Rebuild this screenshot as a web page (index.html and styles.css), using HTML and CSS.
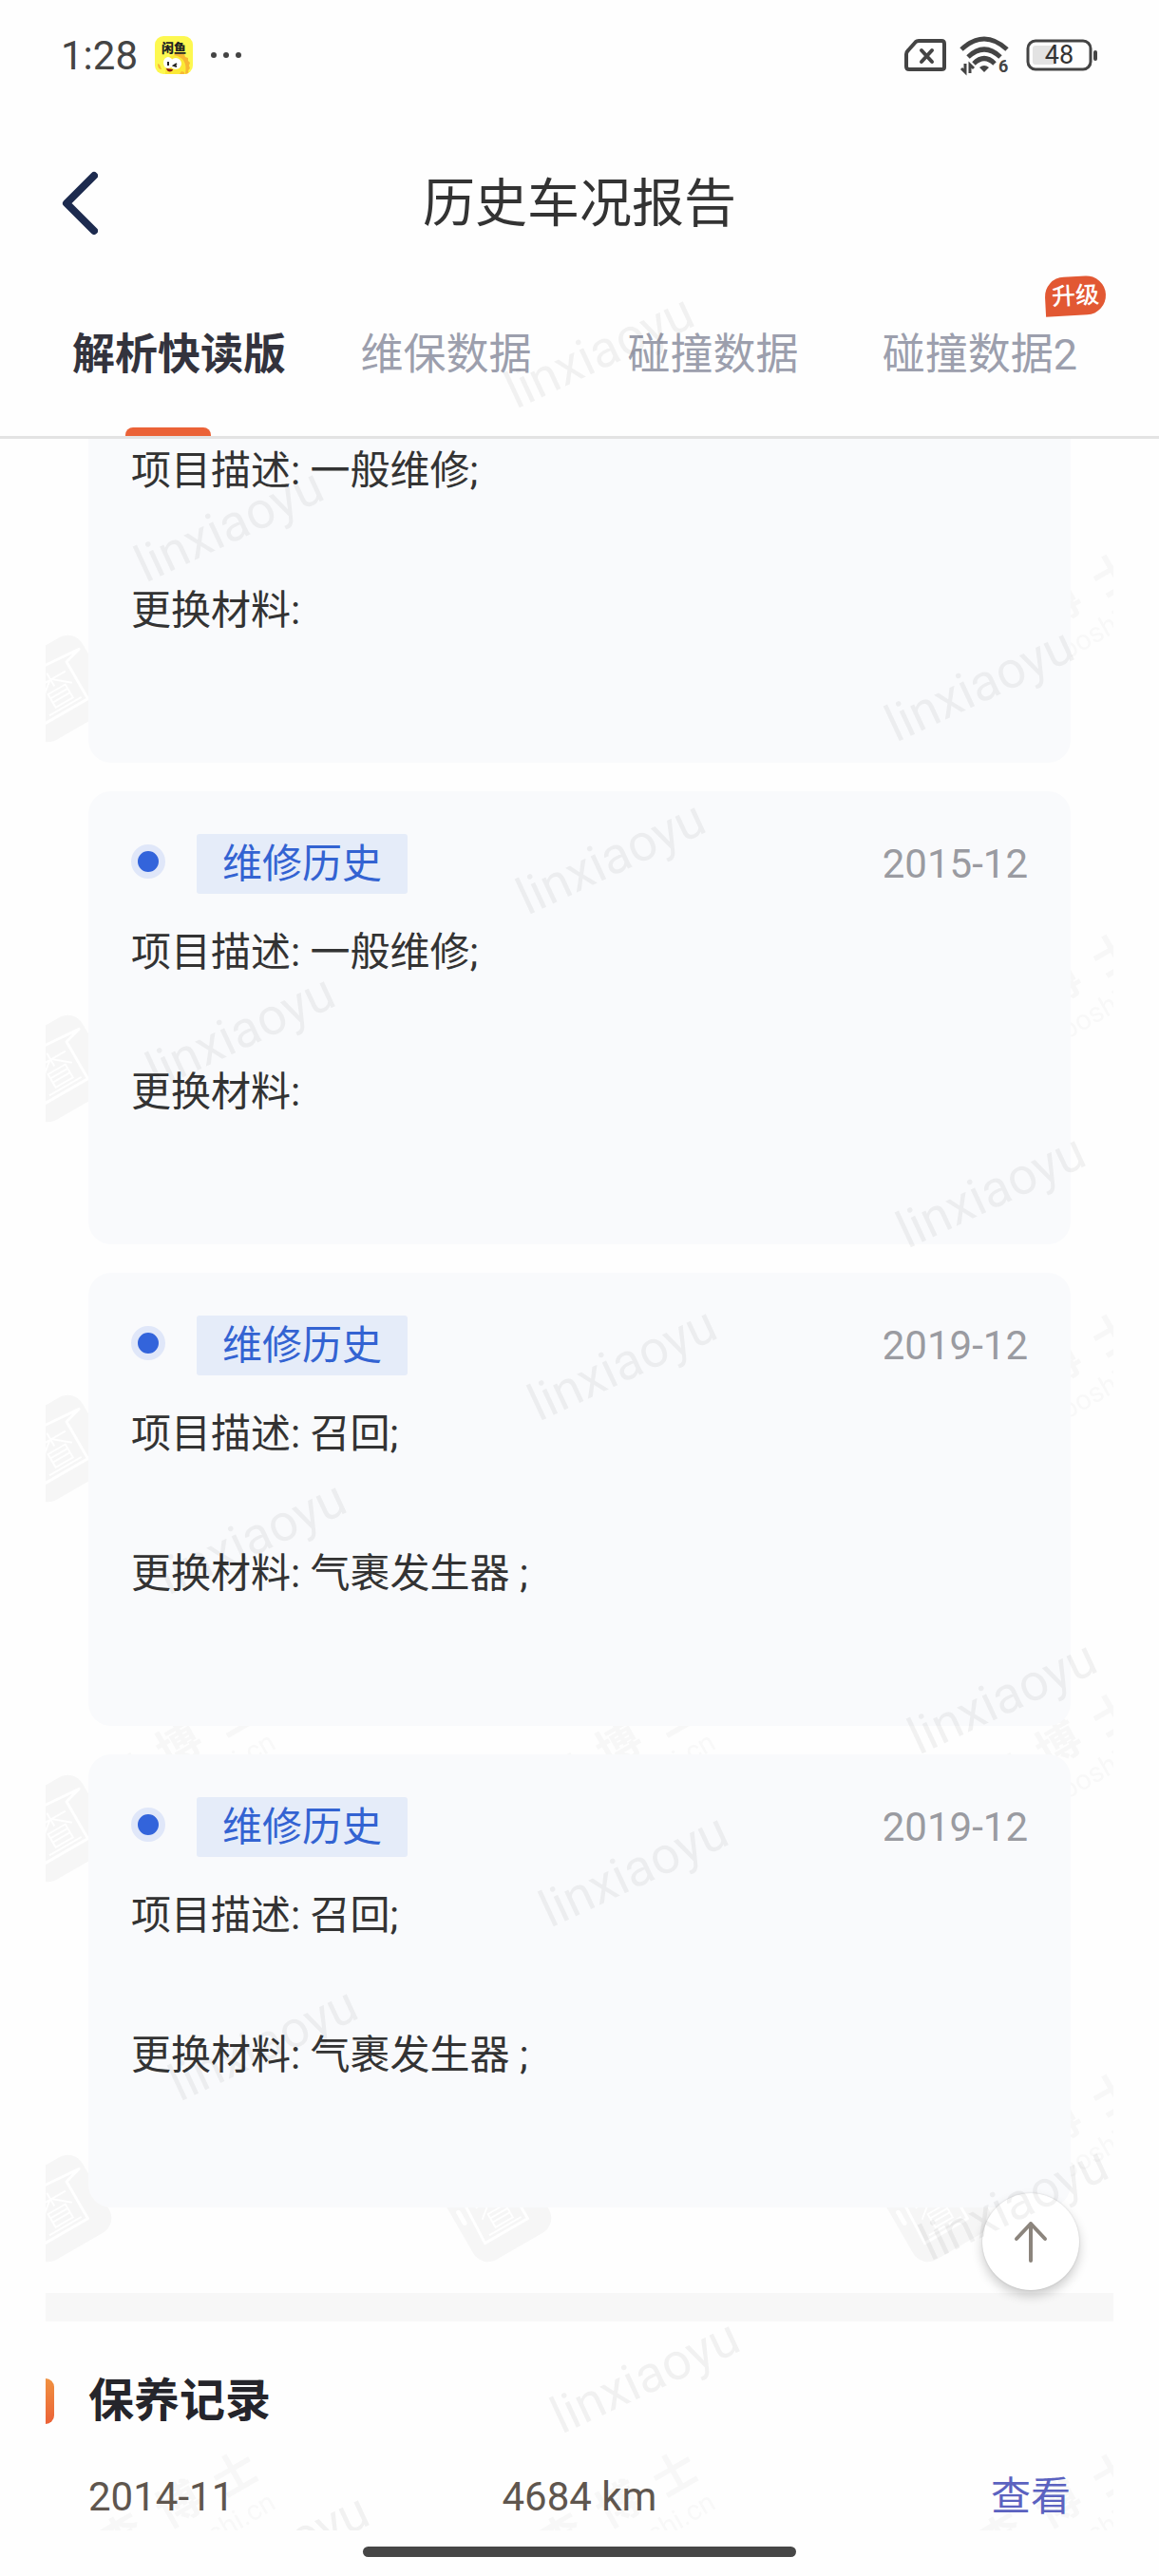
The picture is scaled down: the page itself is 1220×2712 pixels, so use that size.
FILE: index.html
```
<!DOCTYPE html>
<html lang="zh-CN">
<head>
    <meta charset="UTF-8">
    <meta name="viewport" content="width=device-width, initial-scale=1.0">
    <title>历史车况报告</title>
    <link rel="stylesheet" href="styles.css">
</head>
<body>
    <div class="statusbar">
        <div class="status-left">
            <span class="time">1:28</span>
            <svg class="app-icon" width="40" height="40" viewBox="0 0 40 40" aria-hidden="true">
                <defs>
                    <clipPath id="iconClip"><rect width="40" height="40" rx="9"/></clipPath>
                </defs>
                <g clip-path="url(#iconClip)">
                    <rect width="40" height="40" fill="#fdf850"/>
                    <path d="M11 40V30c0-8 8-11 14-10 8 1 11 7 11 14v6z" fill="#fbe936"/>
                    <path d="M22 18l4-1 2 2 3 0 1 3 3 1 0 3 2 2-1 3 1 3-2 2 0 4h-3c2-11-1-18-12-20z" fill="#f7b733"/>
                    <path d="M3 29l2 1 2 5c-3 0-4-3-4-6zM26 40l2-3 3 1v2z" fill="#f7b733"/>
                    <ellipse cx="14" cy="28" rx="5" ry="6" fill="#fff"/>
                    <ellipse cx="22" cy="29" rx="6" ry="6" fill="#fff"/>
                    <path d="M14 27v4M23 29l-3 2 3 1" stroke="#222" stroke-width="2" fill="none"/>
                    <path d="M12 34l7 1c0 3-6 4-7-1z" fill="#8e1b12"/>
                    <text x="20" y="17" class="app-name">闲鱼</text>
                </g>
            </svg>
            <svg width="34" height="8" viewBox="0 0 34 8" aria-hidden="true" fill="#444">
                <circle cx="4" cy="4" r="3"/><circle cx="17" cy="4" r="3"/><circle cx="30" cy="4" r="3"/>
            </svg>
        </div>
        <div class="status-right">
            <svg width="44" height="36" viewBox="0 0 44 36" aria-hidden="true" fill="none" stroke="#444" stroke-width="4" stroke-linejoin="round">
                <path d="M15 3H39Q42 3 42 6V31Q42 33 39 33H5Q2 33 2 30V17Q2 15 4 13L12 4Q13 3 15 3z"/>
                <path d="M18 13l11 12M29 13L18 25" stroke-linecap="round"/>
            </svg>
            <svg width="56" height="44" viewBox="0 0 56 44" aria-hidden="true" fill="none" stroke="#444" stroke-width="5">
                <path d="M2 16Q26-6 50 16M9 24Q26 8 43 24M15 31Q26 20 37 31"/>
                <path d="M21 35Q26 31 31 35L26 40z" fill="#444" stroke="none"/>
                <path d="M6 31v9l-4-4M11 41V32l4 4" stroke-width="3"/>
                <text x="41" y="40" class="wifi-gen">6</text>
            </svg>
            <svg width="76" height="36" viewBox="0 0 76 36" aria-hidden="true">
                <rect x="2" y="3" width="66" height="30" rx="8" fill="none" stroke="#444" stroke-width="3"/>
                <path d="M10 8H31V28H10Q7 28 7 25V11Q7 8 10 8z" fill="#e3e3e3"/>
                <rect x="71" y="13" width="4" height="11" rx="2" fill="#444"/>
                <text x="35" y="27" class="battery-level">48</text>
            </svg>
        </div>
    </div>

    <header class="navbar">
        <button type="button" class="back" aria-label="返回">
            <svg width="38" height="68" viewBox="0 0 38 68" fill="none" stroke="#1d2b4f" stroke-width="8" stroke-linecap="round" stroke-linejoin="round">
                <path d="M34 5L5 34L34 63"/>
            </svg>
        </button>
        <h1>历史车况报告</h1>
    </header>

    <nav class="tabs">
        <a href="#" class="tab active">解析快读版</a>
        <a href="#" class="tab">维保数据</a>
        <a href="#" class="tab">碰撞数据</a>
        <a href="#" class="tab">碰撞数据2<span class="badge">升级</span></a>
    </nav>

    <main class="report">
        <!-- brand watermark behind the cards -->
        <svg class="brand-mark" aria-hidden="true">
            <defs>
                <pattern id="brand" x="-48" y="107" width="463" height="400" patternUnits="userSpaceOnUse">
                    <g transform="translate(61 156) rotate(-30)">
                        <rect x="-46" y="-46" width="92" height="92" rx="18" fill="#f6f6f6"/>
                        <path d="M-28 -22L1 -28L40 -25L22 -20V25H-30z" fill="none" stroke="#fff" stroke-width="3" stroke-linejoin="round"/>
                        <path d="M-38 -17V-4" stroke="#fff" stroke-width="5" stroke-linecap="round"/>
                        <path d="M-20 -12H16M-2 -20V-4M-3 -12L-20 2M-1 -12L16 2M-12 0H9V16H-12zM-12 5H9M-12 10H9M-22 20H17" fill="none" stroke="#fff" stroke-width="2"/>
                    </g>
                    <g class="brand-name">
                        <text transform="translate(128 101) rotate(-30)" y="17">查</text>
                        <text transform="translate(188 67) rotate(-30)" y="17">博</text>
                        <text transform="translate(247 35) rotate(-30)" y="17">士</text>
                    </g>
                    <text class="brand-url" transform="translate(292 71) rotate(-30)">chaboshi.cn</text>
                </pattern>
            </defs>
            <rect width="100%" height="100%" fill="url(#brand)"/>
        </svg>

        <section class="records">
            <article class="card card-cut">
                <p>项目描述: 一般维修;</p>
                <p>更换材料:</p>
            </article>
            <article class="card">
                <div class="card-head">
                    <span class="dot"></span>
                    <span class="tag">维修历史</span>
                    <time>2015-12</time>
                </div>
                <p>项目描述: 一般维修;</p>
                <p>更换材料:</p>
            </article>
            <article class="card">
                <div class="card-head">
                    <span class="dot"></span>
                    <span class="tag">维修历史</span>
                    <time>2019-12</time>
                </div>
                <p>项目描述: 召回;</p>
                <p>更换材料: 气裹发生器 ;</p>
            </article>
            <article class="card">
                <div class="card-head">
                    <span class="dot"></span>
                    <span class="tag">维修历史</span>
                    <time>2019-12</time>
                </div>
                <p>项目描述: 召回;</p>
                <p>更换材料: 气裹发生器 ;</p>
            </article>
        </section>

        <section class="maintenance">
            <h2>保养记录</h2>
            <table>
                <tbody>
                    <tr>
                        <td>2014-11</td>
                        <td>4684 km</td>
                        <td><a href="#">查看</a></td>
                    </tr>
                </tbody>
            </table>
        </section>
    </main>

    <footer class="home-bar"><span></span></footer>

    <button type="button" class="to-top" aria-label="回到顶部">
        <svg width="36" height="44" viewBox="0 0 36 44" fill="none" stroke="#8c857d" stroke-width="4" stroke-linecap="round" stroke-linejoin="round">
            <path d="M18 42V3M3 19L18 3L33 19"/>
        </svg>
    </button>

    <!-- user name watermark over the page -->
    <svg class="user-mark" aria-hidden="true">
        <text transform="translate(543 431) rotate(-25)">linxiaoyu</text>
        <text transform="translate(555 964) rotate(-25)">linxiaoyu</text>
        <text transform="translate(567 1497) rotate(-25)">linxiaoyu</text>
        <text transform="translate(579 2030) rotate(-25)">linxiaoyu</text>
        <text transform="translate(591 2563) rotate(-25)">linxiaoyu</text>
        <text transform="translate(153 614) rotate(-25)">linxiaoyu</text>
        <text transform="translate(165 1147) rotate(-25)">linxiaoyu</text>
        <text transform="translate(177 1680) rotate(-25)">linxiaoyu</text>
        <text transform="translate(189 2213) rotate(-25)">linxiaoyu</text>
        <text transform="translate(201 2746) rotate(-25)">linxiaoyu</text>
        <text transform="translate(943 782) rotate(-25)">linxiaoyu</text>
        <text transform="translate(955 1315) rotate(-25)">linxiaoyu</text>
        <text transform="translate(967 1848) rotate(-25)">linxiaoyu</text>
        <text transform="translate(979 2381) rotate(-25)">linxiaoyu</text>
    </svg>
</body>
</html>
```
FILE: styles.css
```
* {
    box-sizing: border-box;
}

body {
    margin: 0;
    min-height: 100vh;
    display: flex;
    flex-direction: column;
    position: relative;
    background-color: #fefefe;
    color: #333;
    font-family: Roboto, "Noto Sans CJK SC", sans-serif;
    font-size: 42px;
    line-height: 63px;
}

h1, h2, p {
    margin: 0;
}

a {
    color: inherit;
    text-decoration: none;
}

button {
    border: none;
    padding: 0;
    cursor: pointer;
}

svg {
    display: block;
}

/* Status bar */
.statusbar {
    height: 116px;
    padding: 0 64px;
    display: flex;
    justify-content: space-between;
    align-items: center;
}

.status-left, .status-right {
    display: flex;
    align-items: center;
}

.status-left {
    gap: 18px;
}

.status-right {
    gap: 14px;
}

.time {
    font-size: 42px;
    color: #444;
}

.app-name {
    font: 900 13px "Noto Sans CJK SC", sans-serif;
    text-anchor: middle;
    fill: #222;
}

.wifi-gen {
    font: 700 18px Roboto, sans-serif;
    fill: #444;
    stroke: none;
}

.battery-level {
    font: 400 27px Roboto, sans-serif;
    text-anchor: middle;
    fill: #333;
}

/* Title bar */
.navbar {
    height: 196px;
    padding: 0 65px;
    display: grid;
    grid-template-columns: 1fr auto 1fr;
    align-items: center;
}

.navbar h1 {
    font-size: 55px;
    font-weight: 400;
    line-height: 80px;
}

.back {
    justify-self: start;
    background: none;
}

/* Tabs */
.tabs {
    height: 150px;
    padding: 0 48px;
    display: grid;
    grid-template-columns: repeat(4, 1fr);
    border-bottom: 3px solid #e3e3e3;
}

.tab {
    position: relative;
    padding-top: 30px;
    font-size: 45px;
    text-align: center;
    color: #9c9fad;
}

.tab.active {
    font-weight: 700;
    color: #33333d;
}

.tab.active::after {
    content: "";
    position: absolute;
    left: 30%;
    bottom: 0;
    width: 90px;
    height: 9px;
    border-radius: 8px 8px 0 0;
    background-color: #eb6237;
}

.badge {
    position: absolute;
    right: 8px;
    top: -21px;
    padding: 0 7px;
    border-radius: 21px 21px 21px 0;
    background-color: #e25833;
    color: #fff;
    font-size: 25px;
    font-weight: 500;
    line-height: 41px;
    transform: rotate(-3deg);
}

/* Report */
.report {
    flex: 1;
    margin: 0 48px;
    position: relative;
    overflow: hidden;
}

.brand-mark {
    position: absolute;
    inset: 0;
    width: 100%;
    height: 100%;
}

.brand-name {
    font: 700 46px "Noto Sans CJK SC", sans-serif;
    text-anchor: middle;
    fill: #f7f7f7;
}

.brand-url {
    font: 400 29px Roboto, sans-serif;
    text-anchor: end;
    fill: #f8f8f8;
}

.records {
    position: relative;
    display: flex;
    flex-direction: column;
    gap: 30px;
    padding: 0 45px 90px;
    border-bottom: 30px solid #f7f7f7;
}

.card {
    padding: 45px;
    border-radius: 24px;
    background-color: #f9fafc;
}

.card-cut {
    padding-top: 2px;
    border-radius: 0 0 24px 24px;
}

.card p {
    margin-bottom: 84px;
}

.card-head {
    display: flex;
    align-items: center;
    margin-bottom: 30px;
}

.dot {
    width: 36px;
    height: 36px;
    margin: 0 33px 6px 0;
    border: 7px solid #e0e7f9;
    border-radius: 50%;
    background-color: #3364db;
}

.tag {
    padding: 0 27px;
    border-radius: 3px;
    background-color: #e5ecf9;
    color: #3363d2;
}

.card-head time {
    margin-left: auto;
    color: #9a9ba1;
}

.maintenance {
    position: relative;
    padding: 48px 45px 4px;
}

.maintenance h2 {
    margin-bottom: 33px;
    font-size: 48px;
    line-height: 72px;
    color: #25252b;
}

.maintenance h2::before {
    content: "";
    position: absolute;
    left: 0;
    top: 60px;
    width: 9px;
    height: 48px;
    border-radius: 0 9px 9px 0;
    background: linear-gradient(#f09140, #eb6237);
}

.maintenance table {
    width: 100%;
    table-layout: fixed;
    border-collapse: collapse;
    color: #5f564e;
}

.maintenance td {
    padding: 0;
    text-align: center;
}

.maintenance td:first-child {
    text-align: left;
}

.maintenance td:last-child {
    text-align: right;
    color: #5b62c0;
}

.home-bar {
    display: flex;
    justify-content: center;
    padding: 17px 0 21px;
}

.home-bar span {
    width: 456px;
    height: 11px;
    border-radius: 6px;
    background-color: #464646;
}

/* Floating parts */
.to-top {
    position: absolute;
    right: 84px;
    bottom: 302px;
    width: 102px;
    height: 102px;
    display: flex;
    justify-content: center;
    align-items: center;
    border-radius: 50%;
    background-color: #fff;
    box-shadow: 0 6px 12px rgba(0, 0, 0, 0.2), 0 0 2px rgba(0, 0, 0, 0.15);
}

.user-mark {
    position: absolute;
    left: 0;
    top: 0;
    width: 100%;
    height: calc(100% - 49px);
    overflow: hidden;
    pointer-events: none;
    font-size: 54px;
    fill: rgba(0, 0, 0, 0.05);
}
```
